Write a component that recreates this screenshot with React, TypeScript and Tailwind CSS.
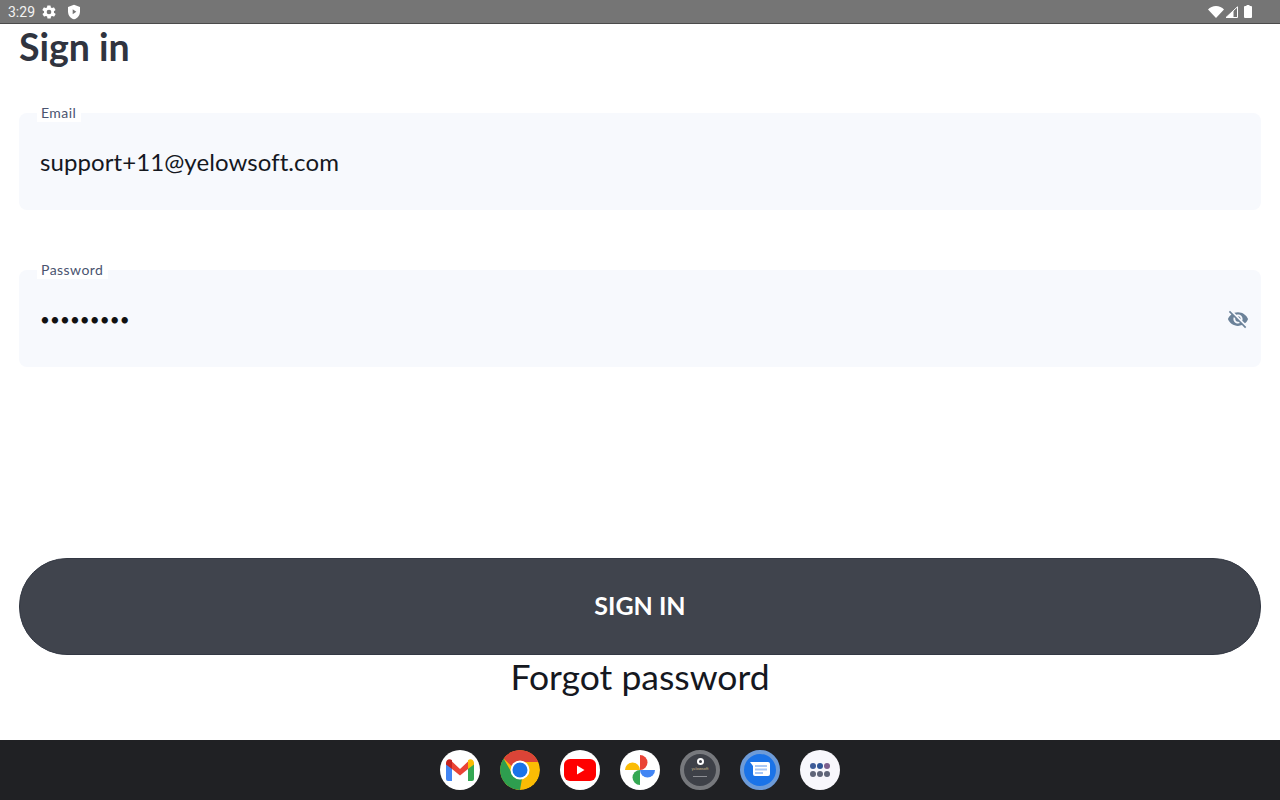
import React from 'react';

const font = "font-['Lato',sans-serif]";

const StatusBar = () => (
  <div className="h-6 bg-[#757575] border-b border-[#4a4a4a] flex items-center justify-between pl-2 pr-[28px] text-white shrink-0">
    <div className="flex items-center">
      <span className="text-sm font-['Roboto',sans-serif] leading-none text-[#f2f2f2]">3:29</span>
      <svg viewBox="0 0 24 24" className="w-4 h-4 ml-[6px]" fill="white">
        <path d="M19.4 13a7.6 7.6 0 0 0 0-2l2.1-1.6a.5.5 0 0 0 .1-.6l-2-3.5a.5.5 0 0 0-.6-.2l-2.5 1a7.3 7.3 0 0 0-1.7-1l-.4-2.6a.5.5 0 0 0-.5-.4h-4a.5.5 0 0 0-.5.4l-.4 2.6a7.3 7.3 0 0 0-1.7 1l-2.5-1a.5.5 0 0 0-.6.2l-2 3.5a.5.5 0 0 0 .1.6L4.6 11a7.6 7.6 0 0 0 0 2l-2.1 1.6a.5.5 0 0 0-.1.6l2 3.5c.1.2.4.3.6.2l2.5-1c.5.4 1.1.7 1.7 1l.4 2.6c0 .2.3.4.5.4h4c.2 0 .5-.2.5-.4l.4-2.6c.6-.3 1.2-.6 1.7-1l2.5 1c.2.1.5 0 .6-.2l2-3.5a.5.5 0 0 0-.1-.6zM12 15.5a3.5 3.5 0 1 1 0-7 3.5 3.5 0 0 1 0 7z" />
      </svg>
      <svg viewBox="0 0 24 24" className="w-4 h-4 ml-[9px]">
        <path fill="white" d="M12 1 3 4.500v6.600C3 16.600 6.800 21.700 12 23c5.200-1.300 9-6.400 9-11.900V4.500z" />
        <path fill="#757575" d="M10 8v7.500l5.500-3.700z" />
      </svg>
    </div>
    <div className="flex items-center">
      <svg viewBox="0 0 16 12" className="w-4 h-3" fill="white">
        <path d="M8 12 0 3.500C2 1.300 4.800 0 8 0s6 1.300 8 3.500z" />
      </svg>
      <svg viewBox="0 0 13 12" className="w-[13px] h-3 ml-[1px]" fill="none">
        <path d="M12.500.8v10.700H1z" stroke="white" strokeWidth="1" />
        <path d="M1 11.500 8.500 4.500v7z" fill="white" />
      </svg>
      <svg viewBox="0 0 8 13" className="w-2 h-[13px] ml-[6px]" fill="white">
        <path d="M2.500 0h3v1H7a1 1 0 0 1 1 1v10a1 1 0 0 1-1 1H1a1 1 0 0 1-1-1V2a1 1 0 0 1 1-1h1.500z" />
      </svg>
    </div>
  </div>
);

type FieldProps = { label: string; children: React.ReactNode };

const Field = ({ label, children }: FieldProps) => (
  <div className="relative h-[97px] rounded-lg bg-[#f7f9fd] flex items-center justify-between pl-[21px] pr-[12px]">
    <span className="absolute left-[18px] -top-[9px] h-[18px] bg-white pl-[4px] pr-[5px] text-sm tracking-[0.45px] leading-[18px] text-[#4a5470]">
      {label}
    </span>
    {children}
  </div>
);

const Dock = () => (
  <div className="h-[60px] bg-[#202124] flex items-center justify-center gap-[20px] shrink-0">
    {/* Gmail */}
    <div className="w-10 h-10 rounded-full bg-white flex items-center justify-center">
      <svg viewBox="0 0 28 22" className="w-7 h-[22px]">
        <path fill="#4285F4" d="M0 4v16a2 2 0 0 0 2 2h4V9z" />
        <path fill="#34A853" d="M28 4v16a2 2 0 0 1-2 2h-4V9z" />
        <path fill="#EA4335" d="M6 2.500 14 10l8-7.500V10l-8 6.500L6 10z" />
        <path fill="#C5221F" d="M0 4c0-3.500 3.700-4.800 6-2.800V10L0 5.500z" />
        <path fill="#FBBC04" d="M28 4c0-3.500-3.700-4.800-6-2.800V10l6-4.500z" />
      </svg>
    </div>
    {/* Chrome */}
    <div className="w-10 h-10 rounded-full overflow-hidden">
      <svg viewBox="0 0 40 40" className="w-10 h-10">
        <circle cx="20" cy="20" r="20" fill="#FBBC04" />
        <path fill="#DB4437" d="M3.500 8.500A20 20 0 0 1 38.500 12H20a8 8 0 0 0-7.500 5z" />
        <path fill="#2E9E4F" d="M3.500 8.500 13 25a8 8 0 0 0 9 3.500L20 40A20 20 0 0 1 3.500 8.500z" />
        <circle cx="20" cy="20" r="9.500" fill="white" />
        <circle cx="20" cy="20" r="7.500" fill="#1A73E8" />
      </svg>
    </div>
    {/* YouTube */}
    <div className="w-10 h-10 rounded-full bg-white flex items-center justify-center">
      <svg viewBox="0 0 32 22" className="w-8 h-[22px]">
        <rect width="32" height="22" rx="6" fill="#FF0000" />
        <path fill="white" d="M13 6.500v9l7.500-4.500z" />
      </svg>
    </div>
    {/* Photos */}
    <div className="w-10 h-10 rounded-full bg-white flex items-center justify-center">
      <svg viewBox="0 0 32 32" className="w-8 h-8">
        <path fill="#FBBC04" d="M1 16a7.500 7.500 0 0 1 15 0z" />
        <path fill="#EA4335" d="M16 1a7.500 7.500 0 0 1 0 15z" />
        <path fill="#4285F4" d="M31 16a7.500 7.500 0 0 1-15 0z" />
        <path fill="#34A853" d="M16 31a7.500 7.500 0 0 1 0-15z" />
      </svg>
    </div>
    {/* Yelowsoft */}
    <div className="w-10 h-10 rounded-full bg-[#3e4148] border-4 border-[#77797d] flex flex-col items-center">
      <span className="mt-[4px] w-[7px] h-[7px] rounded-full border-2 border-white" />
      <span className="mt-[1px] text-[4px] leading-[5px] text-[#c9b98a]">yelowsoft</span>
      <span className="mt-[5px] w-[14px] h-px bg-[#8d8f94]" />
    </div>
    {/* Messages */}
    <div className="w-10 h-10 rounded-full bg-[#1a73e8] border-4 border-[#6d9bd8] flex items-center justify-center">
      <svg viewBox="0 0 20 16" className="w-5 h-4">
        <path fill="white" d="M0 0h18a2 2 0 0 1 2 2v10a2 2 0 0 1-2 2H5a2 2 0 0 1-2-2V4z" />
        <rect x="5" y="3" width="12" height="2" fill="#a9c8f5" />
        <rect x="5" y="6.500" width="12" height="2" fill="#a9c8f5" />
        <rect x="5" y="10" width="8" height="2" fill="#a9c8f5" />
      </svg>
    </div>
    {/* Launcher */}
    <div className="w-10 h-10 rounded-full bg-[#f8f7fc] grid grid-cols-[6px_6px_6px] gap-x-[1px] gap-y-[2px] place-content-center">
      <span className="w-[6px] h-[6px] rounded-full bg-[#3d5a98]" />
      <span className="w-[6px] h-[6px] rounded-full bg-[#2f5597]" />
      <span className="w-[6px] h-[6px] rounded-full bg-[#7d5f8e]" />
      <span className="w-[6px] h-[6px] rounded-full bg-[#5f6478]" />
      <span className="w-[6px] h-[6px] rounded-full bg-[#5f6478]" />
      <span className="w-[6px] h-[6px] rounded-full bg-[#5f6478]" />
    </div>
  </div>
);

const App: React.FC = () => {
  return (
    <div className={`w-[1280px] h-[800px] bg-white flex flex-col overflow-hidden ${font}`}>
      <StatusBar />

      <main className="flex-1 flex flex-col px-[19px]">
        <h1 className="text-[37.5px] leading-[45px] font-bold text-[#30343f]">Sign in</h1>

        <div className="mt-[44px]">
          <Field label="Email">
            <span className="text-2xl tracking-[0.08px] text-[#15181f]">support+11@yelowsoft.com</span>
          </Field>
        </div>

        <div className="mt-[60px]">
          <Field label="Password">
            <span className="text-[17px] tracking-[0.1px] leading-none text-[#111] pt-[2px]">•••••••••</span>
            <svg viewBox="0 0 24 24" className="w-[22px] h-[22px]" fill="#6b8299">
              <path d="M12 7c2.760 0 5 2.240 5 5 0 .65-.13 1.260-.36 1.830l2.920 2.920c1.510-1.260 2.700-2.890 3.430-4.750-1.730-4.390-6-7.500-11-7.500-1.400 0-2.740.25-3.980.7l2.160 2.160C10.740 7.130 11.350 7 12 7zM2 4.270l2.280 2.280.46.46C3.080 8.300 1.780 10.020 1 12c1.730 4.390 6 7.500 11 7.500 1.550 0 3.030-.3 4.380-.84l.42.42L19.730 22 21 20.730 3.270 3 2 4.270zM7.530 9.800l1.550 1.550c-.05.21-.08.43-.08.65 0 1.660 1.340 3 3 3 .22 0 .44-.03.65-.08l1.550 1.550c-.67.33-1.410.53-2.200.53-2.760 0-5-2.240-5-5 0-.79.2-1.530.53-2.200zm4.310-.78l3.150 3.150.02-.16c0-1.660-1.340-3-3-3l-.17.01z" />
            </svg>
          </Field>
        </div>

        <button className="mt-[191px] h-[97px] w-full rounded-[48px] border border-[#333843] bg-[#40444d] text-white text-[25px] font-bold pb-[2px]">
          SIGN IN
        </button>
        <div className="text-center text-[35.500px] leading-[43px] text-[#15181f]">Forgot password</div>
      </main>

      <Dock />
    </div>
  );
};

export default App;
